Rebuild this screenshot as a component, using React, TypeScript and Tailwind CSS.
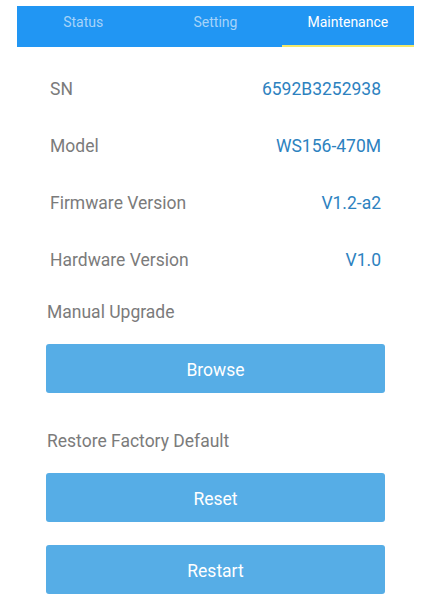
const tabs = ['Status', 'Setting', 'Maintenance']

const info = [
  { label: 'SN', value: '6592B3252938' },
  { label: 'Model', value: 'WS156-470M' },
  { label: 'Firmware Version', value: 'V1.2-a2' },
  { label: 'Hardware Version', value: 'V1.0' },
]

function ActionButton({ label }: { label: string }) {
  return (
    <button className="flex h-[49px] w-[339px] items-center justify-center rounded-[3px] bg-[#56ade6] pt-[3px] text-[17.5px] text-white">
      {label}
    </button>
  )
}

export default function App() {
  return (
    <div className="h-[603px] w-[431px] bg-white font-['Roboto',sans-serif]">
      {/* Tabs */}
      <div className="mx-[17px] flex pt-[6px]">
        {tabs.map((tab, i) => {
          const active = i === 2
          return (
            <div
              key={tab}
              className={`flex h-[41px] flex-1 items-center justify-center border-b-2 bg-[#2196f3] pb-[6px] text-[14px] ${
                active ? 'border-[#f2e86a] text-white' : 'border-[#2196f3] text-[#a6d3f9]'
              }`}
            >
              {tab}
            </div>
          )
        })}
      </div>

      {/* Device info */}
      <div className="mx-[50px] mt-[14px]">
        {info.map((row) => (
          <div key={row.label} className="flex h-[57px] items-center justify-between text-[17.5px]">
            <span className="text-[#7b7b7b]">{row.label}</span>
            <span className="text-[#2d82bf]">{row.value}</span>
          </div>
        ))}
      </div>

      {/* Actions */}
      <div className="ml-[46px] mt-[10px]">
        <p className="pl-px pt-px text-[17.5px] leading-[24px] text-[#7b7b7b]">Manual Upgrade</p>
        <div className="mt-[20px]">
          <ActionButton label="Browse" />
        </div>
        <p className="mt-[35px] pl-px pt-px text-[17.5px] leading-[24px] text-[#7b7b7b]">Restore Factory Default</p>
        <div className="mt-[20px] flex flex-col gap-[23px]">
          <ActionButton label="Reset" />
          <ActionButton label="Restart" />
        </div>
      </div>
    </div>
  )
}
